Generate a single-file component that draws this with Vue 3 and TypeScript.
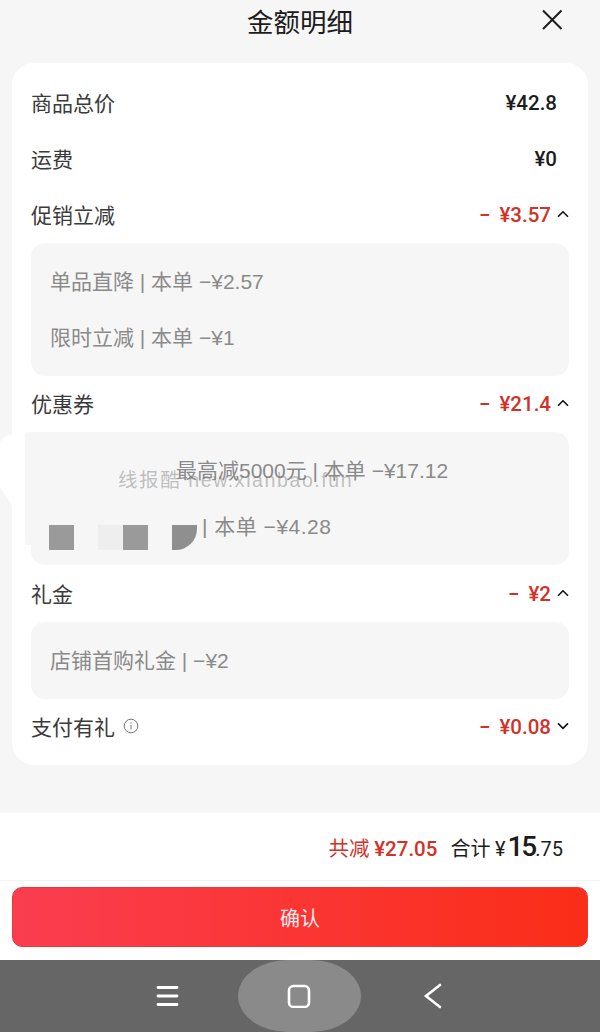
<script setup lang="ts">
interface Row {
  label: string
  value: string
  discount?: boolean
  arrow?: 'up' | 'down'
  info?: boolean
  details?: string[]
  masked?: boolean
}

const rows: Row[] = [
  { label: '商品总价', value: '¥42.8' },
  { label: '运费', value: '¥0' },
  {
    label: '促销立减',
    value: '¥3.57',
    discount: true,
    arrow: 'up',
    details: ['单品直降 | 本单 −¥2.57', '限时立减 | 本单 −¥1'],
  },
  {
    label: '优惠券',
    value: '¥21.4',
    discount: true,
    arrow: 'up',
    masked: true,
    details: ['最高减5000元 | 本单 −¥17.12', '| 本单 −¥4.28'],
  },
  {
    label: '礼金',
    value: '¥2',
    discount: true,
    arrow: 'up',
    details: ['店铺首购礼金 | −¥2'],
  },
  { label: '支付有礼', value: '¥0.08', discount: true, arrow: 'down', info: true },
]
</script>

<template>
  <div class="page">
    <header class="head">
      <h1 class="title">金额明细</h1>
      <svg class="close" width="24" height="24" viewBox="0 0 24 24">
        <path d="M3 2.5 21.5 21M21.5 2.5 3 21" fill="none" stroke="#1c1c1c" stroke-width="2" />
      </svg>
    </header>

    <section class="card">
      <template v-for="row in rows" :key="row.label">
        <div class="row">
          <span class="label">{{ row.label }}</span>
          <svg v-if="row.info" class="info" width="16" height="16" viewBox="0 0 16 16">
            <circle cx="8" cy="8" r="6.8" fill="none" stroke="#777" stroke-width="1" />
            <path d="M8 7v4.4M8 4.4v1.2" fill="none" stroke="#777" stroke-width="1" />
          </svg>
          <span class="value" :class="{ discount: row.discount }">
            <span v-if="row.discount" class="minus">−</span>{{ row.value }}
          </span>
          <svg v-if="row.arrow" class="arrow" width="12" height="8" viewBox="0 0 12 8">
            <path
              :d="row.arrow === 'up' ? 'M1 6.8 6 1.8l5 5' : 'M1 1.4 6 6.4l5-5'"
              fill="none"
              stroke="#111"
              stroke-width="1.6"
            />
          </svg>
        </div>
        <div v-if="row.details" class="details" :class="{ masked: row.masked }">
          <p v-for="d in row.details" :key="d" class="detail">{{ d }}</p>
          <template v-if="row.masked">
            <span class="mark mark-a"></span>
            <span class="mark mark-b"></span>
            <span class="mark mark-c"></span>
            <span class="mark mark-d"></span>
            <span class="watermark">线报酷 new.xianbao.fun</span>
          </template>
        </div>
      </template>
    </section>

    <svg class="blob" width="14" height="72" viewBox="0 0 14 72">
      <path d="M14 0C6 1 1 4 0 10v42c3 8 9 12 12 20h2z" fill="#fff" />
    </svg>

    <section class="summary">
      <span class="saved">共减 <span class="saved-num">¥27.05</span></span>
      <span class="total">合计 <span class="yen">¥</span><span class="big">15</span><span class="small">.75</span></span>
    </section>

    <div class="action">
      <button class="confirm">确认</button>
    </div>

    <nav class="navbar">
      <svg class="nav-icon" width="24" height="24" viewBox="0 0 24 24">
        <path d="M2 3.5h19M2 12h19M2 20.5h19" fill="none" stroke="#fff" stroke-width="2.8" stroke-linecap="round" />
      </svg>
      <div class="home">
        <svg width="24" height="24" viewBox="0 0 24 24">
          <rect x="2" y="2" width="20" height="21" rx="4.5" fill="none" stroke="#fff" stroke-width="2.6" />
        </svg>
      </div>
      <svg class="nav-icon" width="24" height="26" viewBox="0 0 24 26">
        <path d="M19 2 5 13l14 11" fill="none" stroke="#fff" stroke-width="2.6" stroke-linecap="round" />
      </svg>
    </nav>
  </div>
</template>

<style>
html,
body {
  margin: 0;
  background: #f6f6f6;
}
</style>

<style scoped>
.page {
  position: relative;
  width: 600px;
  height: 1032px;
  overflow: hidden;
  display: flex;
  flex-direction: column;
  background: #f6f6f6;
  font-family: "Liberation Sans", "Noto Sans CJK SC", sans-serif;
}

.head {
  height: 63px;
  flex: none;
  position: relative;
  display: flex;
  justify-content: center;
}

.title {
  margin: 0;
  font-size: 26.5px;
  line-height: 41px;
  font-weight: 400;
  color: #1c1c1c;
  font-family: "Noto Sans CJK SC", sans-serif;
}

.close {
  position: absolute;
  right: 36px;
  top: 8px;
}

.card {
  margin: 0 12px;
  height: 702px;
  box-sizing: border-box;
  padding: 12px 19px 0;
  flex: none;
  background: #fff;
  border-radius: 22px;
}

.row {
  height: 56px;
  display: flex;
  align-items: center;
}

.label {
  font-size: 21px;
  line-height: 30px;
  padding-bottom: 2px;
  color: #3a3a3a;
  font-family: "Noto Sans CJK SC", sans-serif;
}

.info {
  margin-left: 8px;
  margin-bottom: 2px;
}

.value {
  margin-left: auto;
  margin-right: 12px;
  font-size: 20.5px;
  font-weight: 500;
  color: #1c1c1c;
  font-family: Roboto, "Liberation Sans", sans-serif;
}

.value.discount {
  color: #d03228;
  margin-right: 6px;
}

.minus {
  margin-right: 9px;
}

.arrow {
  flex: none;
  margin-bottom: 2px;
}

.details {
  position: relative;
  background: #f6f6f6;
  border-radius: 14px;
  padding: 11px 0 10px 19px;
}

.details.masked {
  margin-bottom: 1px;
}

/* the retouched patch spills out past the left edge of this box */
.details.masked::before {
  content: "";
  position: absolute;
  left: -6px;
  top: 0;
  width: 20px;
  height: 113px;
  background: #f6f6f6;
  border-radius: 4px 0 0 4px;
}

.detail {
  position: relative;
  margin: 0;
  height: 56px;
  line-height: 56px;
  font-size: 21px;
  color: #8a8a8a;
  white-space: nowrap;
  font-family: "Liberation Sans", "Noto Sans CJK SC", sans-serif;
}

.masked .detail:first-child {
  padding-left: 126px;
}

.masked .detail:nth-child(2) {
  padding-left: 152px;
  letter-spacing: 0.5px;
}

.mark {
  position: absolute;
  top: 93px;
  width: 25px;
  height: 25px;
  background: #9a9a9a;
}

.mark-a {
  left: 18px;
}

.mark-b {
  left: 67px;
  background: #eeeeee;
}

.mark-c {
  left: 92px;
}

.mark-d {
  left: 141px;
  background: #8f8f8f;
  border-radius: 0 0 85% 0;
}

.watermark {
  position: absolute;
  left: 87px;
  top: 36px;
  font-size: 19.5px;
  line-height: 24px;
  letter-spacing: 1.6px;
  color: rgba(120, 120, 120, 0.45);
  white-space: nowrap;
}

.blob {
  position: absolute;
  left: 0;
  top: 434px;
}

.summary {
  margin-top: 48px;
  height: 67px;
  flex: none;
  background: #fff;
  border-bottom: 1px solid #f2f2f2;
  display: flex;
  justify-content: flex-end;
  align-items: center;
  gap: 13px;
  padding-right: 37px;
}

.saved {
  font-size: 20.5px;
  color: #d03228;
  font-family: "Noto Sans CJK SC", sans-serif;
}

.saved-num {
  font-family: Roboto, sans-serif;
  font-weight: 500;
}

.total {
  font-size: 20px;
  color: #1c1c1c;
  font-family: "Noto Sans CJK SC", sans-serif;
}

.yen {
  font-family: Roboto, sans-serif;
  margin-right: 2px;
}

.big {
  font-size: 28px;
  letter-spacing: -2px;
  font-weight: 500;
  font-family: Roboto, sans-serif;
}

.small {
  font-size: 20px;
  font-family: Roboto, sans-serif;
}

.action {
  flex: none;
  height: 79px;
  box-sizing: border-box;
  padding: 6px 12px 13px;
  background: #fff;
}

.confirm {
  width: 100%;
  height: 60px;
  border: 1px solid #e83a3a;
  border-radius: 10px;
  background: linear-gradient(90deg, #fa3d50, #fa2d17);
  color: #f8eaea;
  font-size: 20px;
  font-family: "Noto Sans CJK SC", sans-serif;
}

.navbar {
  flex: 1;
  background: #666;
  display: flex;
  justify-content: center;
  align-items: center;
}

.home {
  width: 123px;
  height: 72px;
  margin: 0 60px 0 58px;
  border-radius: 50px / 36px;
  background: #8a8a8a;
  display: flex;
  align-items: center;
  justify-content: center;
}
</style>
